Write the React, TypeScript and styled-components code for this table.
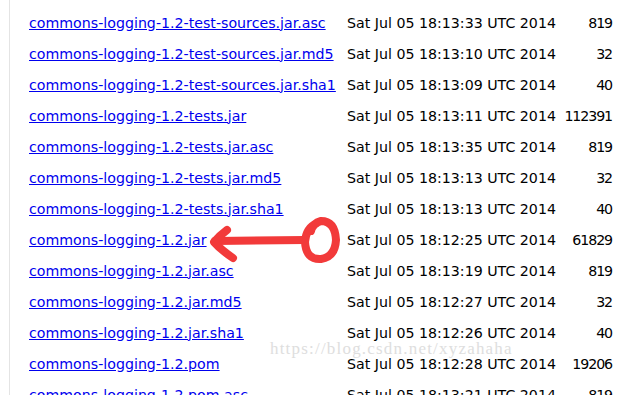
import React from "react"
import styled, { createGlobalStyle } from "styled-components"

const GlobalStyle = createGlobalStyle`
  html, body {
    margin: 0;
    padding: 0;
    background: #fff;
    overflow: hidden;
  }
`

const Page = styled.div`
  position: relative;
  width: 644px;
  height: 395px;
  overflow: hidden;
  background: #fff;
`

const Frame = styled.div`
  margin-left: 9px;
  border-left: 1px solid #e4e4e4;
  min-height: 395px;
  padding-left: 19px;
`

const Listing = styled.div`
  display: flex;
  flex-direction: column;
  margin-top: -24px;
  font-family: "DejaVu Sans", Verdana, sans-serif;
  font-size: 14.2px;
`

const Row = styled.div`
  display: flex;
  align-items: center;
  height: 31px;
`

const FileLink = styled.a`
  flex: 0 0 318px;
  color: #0000ee;
  text-decoration: underline;
  white-space: nowrap;
`

const Date = styled.span`
  flex: 0 0 210px;
  color: #000;
  white-space: nowrap;
`

const Size = styled.span`
  flex: 0 0 55px;
  text-align: right;
  color: #000;
  letter-spacing: -1.1px;
`

const Mark = styled.svg`
  position: absolute;
  left: 205px;
  top: 215px;
`

const Watermark = styled.div`
  position: absolute;
  left: 270px;
  top: 339px;
  font-family: "Liberation Serif", serif;
  font-size: 17px;
  letter-spacing: 1.2px;
  color: #dedede;
  text-shadow: 1px 1px 0 #fff, -1px -1px 0 #fff;
  pointer-events: none;
`

const files = [
  ["commons-logging-1.2-test-sources.jar", "Sat Jul 05 18:13:08 UTC 2014", "45210"],
  ["commons-logging-1.2-test-sources.jar.asc", "Sat Jul 05 18:13:33 UTC 2014", "819"],
  ["commons-logging-1.2-test-sources.jar.md5", "Sat Jul 05 18:13:10 UTC 2014", "32"],
  ["commons-logging-1.2-test-sources.jar.sha1", "Sat Jul 05 18:13:09 UTC 2014", "40"],
  ["commons-logging-1.2-tests.jar", "Sat Jul 05 18:13:11 UTC 2014", "112391"],
  ["commons-logging-1.2-tests.jar.asc", "Sat Jul 05 18:13:35 UTC 2014", "819"],
  ["commons-logging-1.2-tests.jar.md5", "Sat Jul 05 18:13:13 UTC 2014", "32"],
  ["commons-logging-1.2-tests.jar.sha1", "Sat Jul 05 18:13:13 UTC 2014", "40"],
  ["commons-logging-1.2.jar", "Sat Jul 05 18:12:25 UTC 2014", "61829"],
  ["commons-logging-1.2.jar.asc", "Sat Jul 05 18:13:19 UTC 2014", "819"],
  ["commons-logging-1.2.jar.md5", "Sat Jul 05 18:12:27 UTC 2014", "32"],
  ["commons-logging-1.2.jar.sha1", "Sat Jul 05 18:12:26 UTC 2014", "40"],
  ["commons-logging-1.2.pom", "Sat Jul 05 18:12:28 UTC 2014", "19206"],
  ["commons-logging-1.2.pom.asc", "Sat Jul 05 18:13:21 UTC 2014", "819"],
]

const App = () => {
  return (
    <Page>
      <GlobalStyle />
      <Frame>
        <Listing>
          {files.map(([name, date, size]) => (
            <Row key={name}>
              <FileLink href="#">{name}</FileLink>
              <Date>{date}</Date>
              <Size>{size}</Size>
            </Row>
          ))}
        </Listing>
      </Frame>

      {/* hand-drawn red arrow pointing at the jar */}
      <Mark width="140" height="55" viewBox="0 0 140 55">
        <g fill="none" stroke="#f23a3a" strokeWidth="8" strokeLinecap="round" strokeLinejoin="round">
          <path d="M10 26 L100 25" />
          <path d="M22 15 Q14 21 9 27 Q16 35 28 43" />
          <path d="M112 8 Q101 13 100 27 Q101 45 116 44 Q130 42 131 25 Q130 6 116 6 Q108 8 106 16" />
        </g>
      </Mark>

      <Watermark>https://blog.csdn.net/xyzahaha</Watermark>
    </Page>
  )
}

export default App
